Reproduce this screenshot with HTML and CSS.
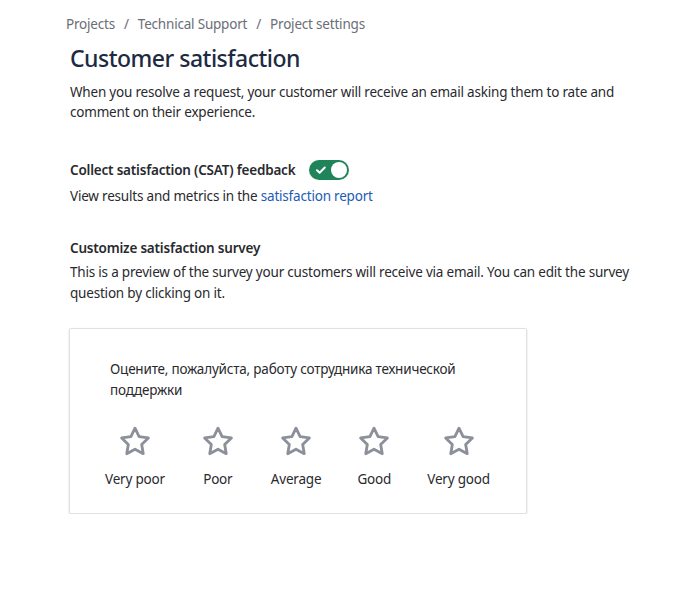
FILE: index.html
```html
<!DOCTYPE html>
<html lang="en">
<head>
<meta charset="utf-8">
<title>Customer satisfaction</title>
<link rel="stylesheet" href="styles.css">
</head>
<body>
<div class="page">
  <nav class="crumbs">
    <span>Projects</span><span class="sep">/</span><span>Technical Support</span><span class="sep">/</span><span>Project settings</span>
  </nav>
  <h1 class="title">Customer satisfaction</h1>
  <p class="text">When you resolve a request, your customer will receive an email asking them to rate and comment on their experience.</p>

  <div class="toggle-row">
    <span class="label">Collect satisfaction (CSAT) feedback</span>
    <span class="toggle">
      <svg class="check" width="12" height="12" viewBox="0 0 12 12"><path d="M2 6.3l2.6 2.4 5.2-5.2" fill="none" stroke="#fff" stroke-width="2" stroke-linecap="round" stroke-linejoin="round"/></svg>
      <span class="knob"></span>
    </span>
  </div>
  <p class="text tight">View results and metrics in the <a class="link" href="#">satisfaction report</a></p>

  <h2 class="subhead">Customize satisfaction survey</h2>
  <p class="text tighter">This is a preview of the survey your customers will receive via email. You can edit the survey question by clicking on it.</p>

  <div class="card">
    <p class="question">Оцените, пожалуйста, работу сотрудника технической поддержки</p>
    <div class="ratings">
      <div class="rating"><svg class="star" viewBox="0 0 24 24"><path d="M12 2.8l2.75 5.6 6.15.9-4.45 4.33 1.05 6.13L12 16.87l-5.5 2.89 1.05-6.13L3.1 9.3l6.15-.9z"/></svg><span>Very poor</span></div>
      <div class="rating"><svg class="star" viewBox="0 0 24 24"><path d="M12 2.8l2.75 5.6 6.15.9-4.45 4.33 1.05 6.13L12 16.87l-5.5 2.89 1.05-6.13L3.1 9.3l6.15-.9z"/></svg><span>Poor</span></div>
      <div class="rating"><svg class="star" viewBox="0 0 24 24"><path d="M12 2.8l2.75 5.6 6.15.9-4.45 4.33 1.05 6.13L12 16.87l-5.5 2.89 1.05-6.13L3.1 9.3l6.15-.9z"/></svg><span>Average</span></div>
      <div class="rating"><svg class="star" viewBox="0 0 24 24"><path d="M12 2.8l2.75 5.6 6.15.9-4.45 4.33 1.05 6.13L12 16.87l-5.5 2.89 1.05-6.13L3.1 9.3l6.15-.9z"/></svg><span>Good</span></div>
      <div class="rating"><svg class="star" viewBox="0 0 24 24"><path d="M12 2.8l2.75 5.6 6.15.9-4.45 4.33 1.05 6.13L12 16.87l-5.5 2.89 1.05-6.13L3.1 9.3l6.15-.9z"/></svg><span>Very good</span></div>
    </div>
  </div>
</div>
</body>
</html>
```

FILE: styles.css
```css
* { box-sizing: border-box; }
html, body { margin: 0; padding: 0; background: #fff; }
body {
  font-family: "Noto Sans", "Open Sans", sans-serif;
  font-size: 13.5px;
  letter-spacing: -0.2px;
  color: #292a2e;
}
.page {
  padding: 14px 0 0 70px;
  width: 650px;
}
.crumbs {
  margin-left: -4px;
  color: #6b6e76;
  line-height: 20px;
  display: flex;
}
.crumbs .sep { margin: 0 9px; }
.title {
  margin: 10px 0 0 0;
  font-size: 23px;
  line-height: 28px;
  font-weight: 500;
  letter-spacing: -0.5px;
  color: #1c2b42;
}
.text {
  margin: 10px 0 0 0;
  line-height: 20px;
}
.text.tight { margin-top: 6px; }
.text.tighter { margin-top: 4px; line-height: 21px; }
.toggle-row {
  margin-top: 38px;
  display: flex;
  align-items: center;
  gap: 14px;
  height: 20px;
}
.label { font-weight: 600; }
.toggle {
  width: 40px;
  height: 20px;
  border-radius: 10px;
  background: #1f845a;
  display: flex;
  align-items: center;
  justify-content: space-between;
  padding: 0 2px 0 6px;
}
.knob {
  width: 16px;
  height: 16px;
  border-radius: 50%;
  background: #fff;
}
.link { color: #1d5cb4; text-decoration: none; }
.subhead {
  margin: 32px 0 0 0;
  font-size: 13.5px;
  line-height: 20px;
  font-weight: 600;
}
.card {
  margin-top: 24px;
  margin-left: -1px;
  width: 458px;
  border: 1px solid #dfe1e6;
  border-radius: 2px;
  box-shadow: 0 1px 2px rgba(9, 30, 66, 0.18);
  padding: 30px 40px 24px 40px;
}
.question {
  margin: 0;
  line-height: 21px;
  width: 370px;
}
.ratings {
  margin-top: 23px;
  margin-left: -5px;
  display: flex;
  gap: 35px;
}
.rating {
  display: flex;
  flex-direction: column;
  align-items: center;
  gap: 9px;
  white-space: nowrap;
}
.star {
  width: 36px;
  height: 36px;
  fill: none;
  stroke: #8c9099;
  stroke-width: 1.9;
  stroke-linejoin: round;
}
.rating span { line-height: 20px; }
```
